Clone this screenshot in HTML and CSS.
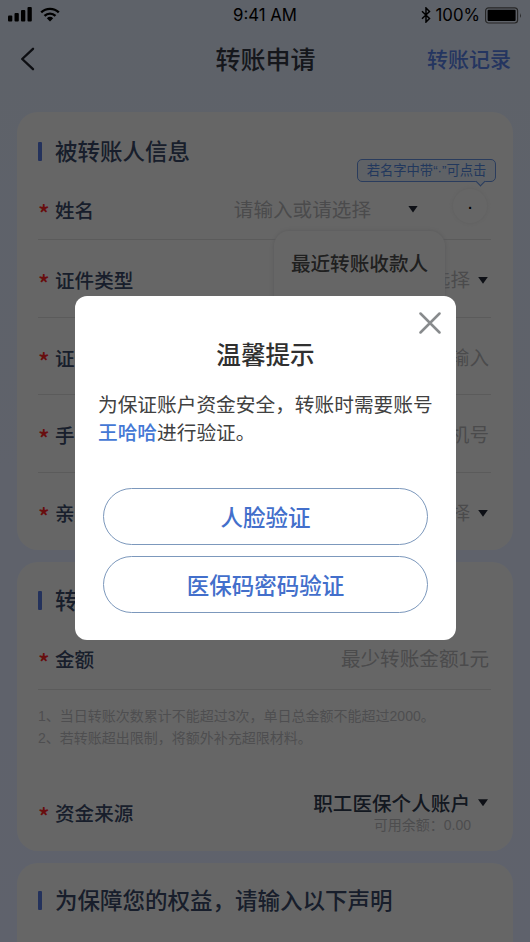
FILE: index.html
```html
<!DOCTYPE html>
<html lang="zh-CN">
<head>
<meta charset="utf-8">
<title>转账申请</title>
<link rel="stylesheet" href="styles.css">
</head>
<body>
<div class="screen">
  <header class="status">
    <div class="status-left">
      <svg width="25" height="16" viewBox="0 0 25 16"><rect x="0" y="9.5" width="4.3" height="6" rx="1"/><rect x="6.5" y="7" width="4.3" height="8.5" rx="1"/><rect x="13" y="4" width="4.3" height="11.500" rx="1"/><rect x="19.500" y="1" width="4.300" height="14.500" rx="1"/></svg>
      <svg class="wifi" width="20" height="15" viewBox="0 0 20 15"><path d="M1.200 5.400a12.800 12.800 0 0 1 17.600 0M4.500 8.800a8 8 0 0 1 11 0" fill="none" stroke="#000" stroke-width="2.400"/><path d="M6.800 11.200a4.700 4.700 0 0 1 6.400 0L10 14.500z"/></svg>
    </div>
    <div class="time">9:41 AM</div>
    <div class="status-right">
      <svg width="10" height="16" viewBox="0 0 10 16"><path d="M1 4.300l7.500 7.200L5 15V1l3.500 3.500L1 11.700" fill="none" stroke="#000" stroke-width="1.500"/></svg>
      <span class="percent">100%</span>
      <svg class="battery" width="37" height="17" viewBox="0 0 37 17"><rect x=".6" y=".8" width="32" height="15.200" rx="3" fill="none" stroke="#555" stroke-width="1.200"/><rect x="2.600" y="2.800" width="28" height="11.200" rx="1"/><path d="M35 6v5q1.500-2.500 0-5z" fill="#444"/></svg>
    </div>
  </header>
  <nav class="nav">
    <svg class="back" width="16" height="24" viewBox="0 0 16 24"><path d="M13 1.800L2.200 12 13 22.200" fill="none" stroke="#1d2028" stroke-width="2.400" stroke-linecap="round" stroke-linejoin="round"/></svg>
    <h1>转账申请</h1>
    <a class="record">转账记录</a>
  </nav>
  <main class="cards">
    <section class="card payee">
      <h2>被转账人信息</h2>
      <div class="row name">
        <label>姓名</label>
        <span class="value">请输入或请选择</span>
        <i class="arrow"></i>
        <span class="dot">·</span>
        <div class="tip">若名字中带“·”可点击</div>
        <div class="recent">最近转账收款人</div>
      </div>
      <div class="row"><label>证件类型</label><span class="value">请选择</span><i class="arrow"></i></div>
      <div class="row"><label>证件号码</label><span class="value">请输入</span></div>
      <div class="row"><label>手机号</label><span class="value">请输入手机号</span></div>
      <div class="row"><label>亲属关系</label><span class="value">请选择</span><i class="arrow"></i></div>
    </section>
    <section class="card transfer">
      <h2>转账信息</h2>
      <div class="row amount"><label>金额</label><span class="value">最少转账金额1元</span></div>
      <div class="notes">1、当日转账次数累计不能超过3次，单日总金额不能超过2000。<br>2、若转账超出限制，将额外补充超限材料。</div>
      <div class="row source">
        <label>资金来源</label>
        <div class="account"><div class="picked"><span>职工医保个人账户</span><i class="arrow"></i></div><div class="balance">可用余额：0.00</div></div>
      </div>
    </section>
    <section class="card statement"><h2>为保障您的权益，请输入以下声明</h2></section>
  </main>
  <div class="overlay">
    <div class="dialog">
      <svg class="close" width="22" height="22" viewBox="0 0 22 22"><path d="M1.500 1.500l19 19M20.500 1.500l-19 19" stroke="#888b8d" stroke-width="2.500" stroke-linecap="round"/></svg>
      <h3>温馨提示</h3>
      <p>为保证账户资金安全，转账时需要账号<br><b>王哈哈</b>进行验证。</p>
      <button>人脸验证</button>
      <button>医保码密码验证</button>
    </div>
  </div>
</div>
</body>
</html>
```
FILE: styles.css
```css
* { box-sizing: border-box; margin: 0; padding: 0; }

body {
  font-family: "Liberation Sans", "Noto Sans CJK SC", sans-serif;
  font-size: 19.6px;
  overflow: hidden;
}

.screen {
  position: relative;
  width: 530px;
  height: 942px;
  overflow: hidden;
  background: linear-gradient(#d1d9e8, #d2daed 50%, #d3daef);
}

.status {
  display: grid;
  grid-template-columns: 1fr auto 1fr;
  align-items: center;
  height: 30px;
  padding: 0 8px;
  font: 400 16.800px/30px Inter, sans-serif;
}

.status-left, .status-right { display: flex; align-items: center; }
.status-left { gap: 7px; padding-bottom: 2px; }
.status-right { justify-content: flex-end; }
.percent { margin: 0 5px; }

.nav {
  display: grid;
  grid-template-columns: 1fr auto 1fr;
  align-items: center;
  height: 58px;
  padding: 0 19px 0 20px;
}

h1 {
  font-family: "Noto Sans CJK SC", sans-serif;
  font-size: 25px;
  font-weight: 500;
  line-height: 36px;
  padding-bottom: 2px;
  color: #30343e;
}

.record {
  justify-self: end;
  padding-bottom: 2px;
  font: 500 21px/30px "Noto Sans CJK SC", sans-serif;
  color: #5075d4;
}

.cards {
  display: flex;
  flex-direction: column;
  gap: 12px;
  padding: 24px 17px 0;
}

.card {
  flex: none;
  padding: 0 22px 0 21px;
  border-radius: 21px;
  background: #e3e3e3;
}

.payee { height: 438px; }
.transfer { height: 289px; }
.statement { height: 120px; }

h2 {
  display: flex;
  align-items: center;
  height: 78px;
  padding-bottom: 4px;
  font: 500 22.500px/34px "Noto Sans CJK SC", sans-serif;
  color: #35435f;
}

h2::before {
  content: "";
  width: 4px;
  height: 19px;
  margin: 2px 13px 0 0;
  border-radius: 1px;
  background: #5070cc;
}

.statement h2 { padding-bottom: 6px; }
.payee h2 { height: 68px; padding: 8px 0 0; }

.row {
  position: relative;
  display: flex;
  align-items: center;
  height: 77.500px;
  padding-top: 4px;
  border-bottom: 1px solid #c9c9cb;
}

.row:last-child { border-bottom: 0; }
.row.name { height: 60px; padding-top: 0; }

label {
  display: flex;
  align-items: center;
  margin-right: auto;
  font: 500 19.600px/28px "Noto Sans CJK SC", sans-serif;
  color: #35435f;
}

label::before {
  content: "*";
  width: 17px;
  height: 28px;
  font: 500 24px/34px "Noto Sans CJK SC", sans-serif;
  color: #e62020;
}

.value { padding-right: 2px; line-height: 28px; color: #a6a6a9; }

.arrow {
  width: 10px;
  height: 7px;
  margin: 0 3px 0 6px;
  background: #1f2531;
  clip-path: polygon(0 0, 100% 0, 50% 100%);
}

.name .value { padding: 0; }
.name .arrow { margin: -1px 35px 0 37px; }

.dot {
  width: 34px;
  height: 34px;
  margin: -7px 4px 0 0;
  border-radius: 50%;
  text-align: center;
  font: 400 20px/34px "Liberation Sans", sans-serif;
  box-shadow: 0 0 5px #d0d0d0;
}

.tip {
  position: absolute;
  top: -21px;
  right: -5px;
  width: 139px;
  height: 23px;
  border: 1.500px solid #5d86cf;
  border-radius: 5px;
  background: #d2d9e2;
  color: #4d7dce;
  font-size: 13.300px;
  line-height: 22px;
  text-align: center;
  white-space: nowrap;
}

.tip::after {
  content: "";
  position: absolute;
  right: 11px;
  bottom: -4px;
  width: 6px;
  height: 6px;
  border: solid #5d86cf;
  border-width: 0 1px 1px 0;
  background: #d2d9e2;
  transform: rotate(45deg);
}

.recent {
  position: absolute;
  z-index: 1;
  top: 51px;
  left: 236px;
  width: 171px;
  height: 120px;
  border-radius: 15px;
  background: #e3e3e3;
  box-shadow: 0 0 5px #c4c4c6;
  color: #474747;
  font: 500 19.600px/63px "Noto Sans CJK SC", sans-serif;
  text-align: center;
}

.transfer .amount { height: 50px; padding-bottom: 12px; padding-top: 0; }

.notes {
  height: 84px;
  padding-top: 16px;
  font-size: 14px;
  line-height: 21.500px;
  color: #aeaeb1;
  white-space: nowrap;
}

.transfer .source { padding: 1px 0 0; }
.account { text-align: right; }
.picked { display: flex; align-items: center; height: 25px; font-weight: 500; color: #2b3548; }
.picked span { padding-right: 2px; }
.balance { padding-right: 20px; font-size: 14px; line-height: 21px; color: #aaaaad; }

.overlay {
  position: absolute;
  z-index: 2;
  inset: 0;
  padding: 296px 74px 0 75px;
  background: rgba(0, 0, 0, .55);
}

.dialog {
  position: relative;
  height: 344px;
  padding: 37px 28px 0;
  border-radius: 12px;
  background: #fff;
  font-family: "Noto Sans CJK SC", sans-serif;
}

.close { position: absolute; top: 16px; right: 15px; }

h3 {
  font-size: 24.600px;
  font-weight: 500;
  line-height: 40px;
  text-align: center;
  color: #303030;
}

p {
  height: 115px;
  margin: 0 -5px;
  padding-top: 17px;
  font-size: 19.700px;
  line-height: 28px;
  white-space: nowrap;
  color: #414141;
}

b { font-weight: 500; color: #4478d5; }

button {
  display: block;
  width: 325px;
  height: 57px;
  margin-bottom: 11px;
  padding-bottom: 2px;
  border: 1px solid #7c98bc;
  border-radius: 29px;
  background: #fff;
  color: #436fcb;
  font: 500 22.500px/34px "Noto Sans CJK SC", sans-serif;
}
```
